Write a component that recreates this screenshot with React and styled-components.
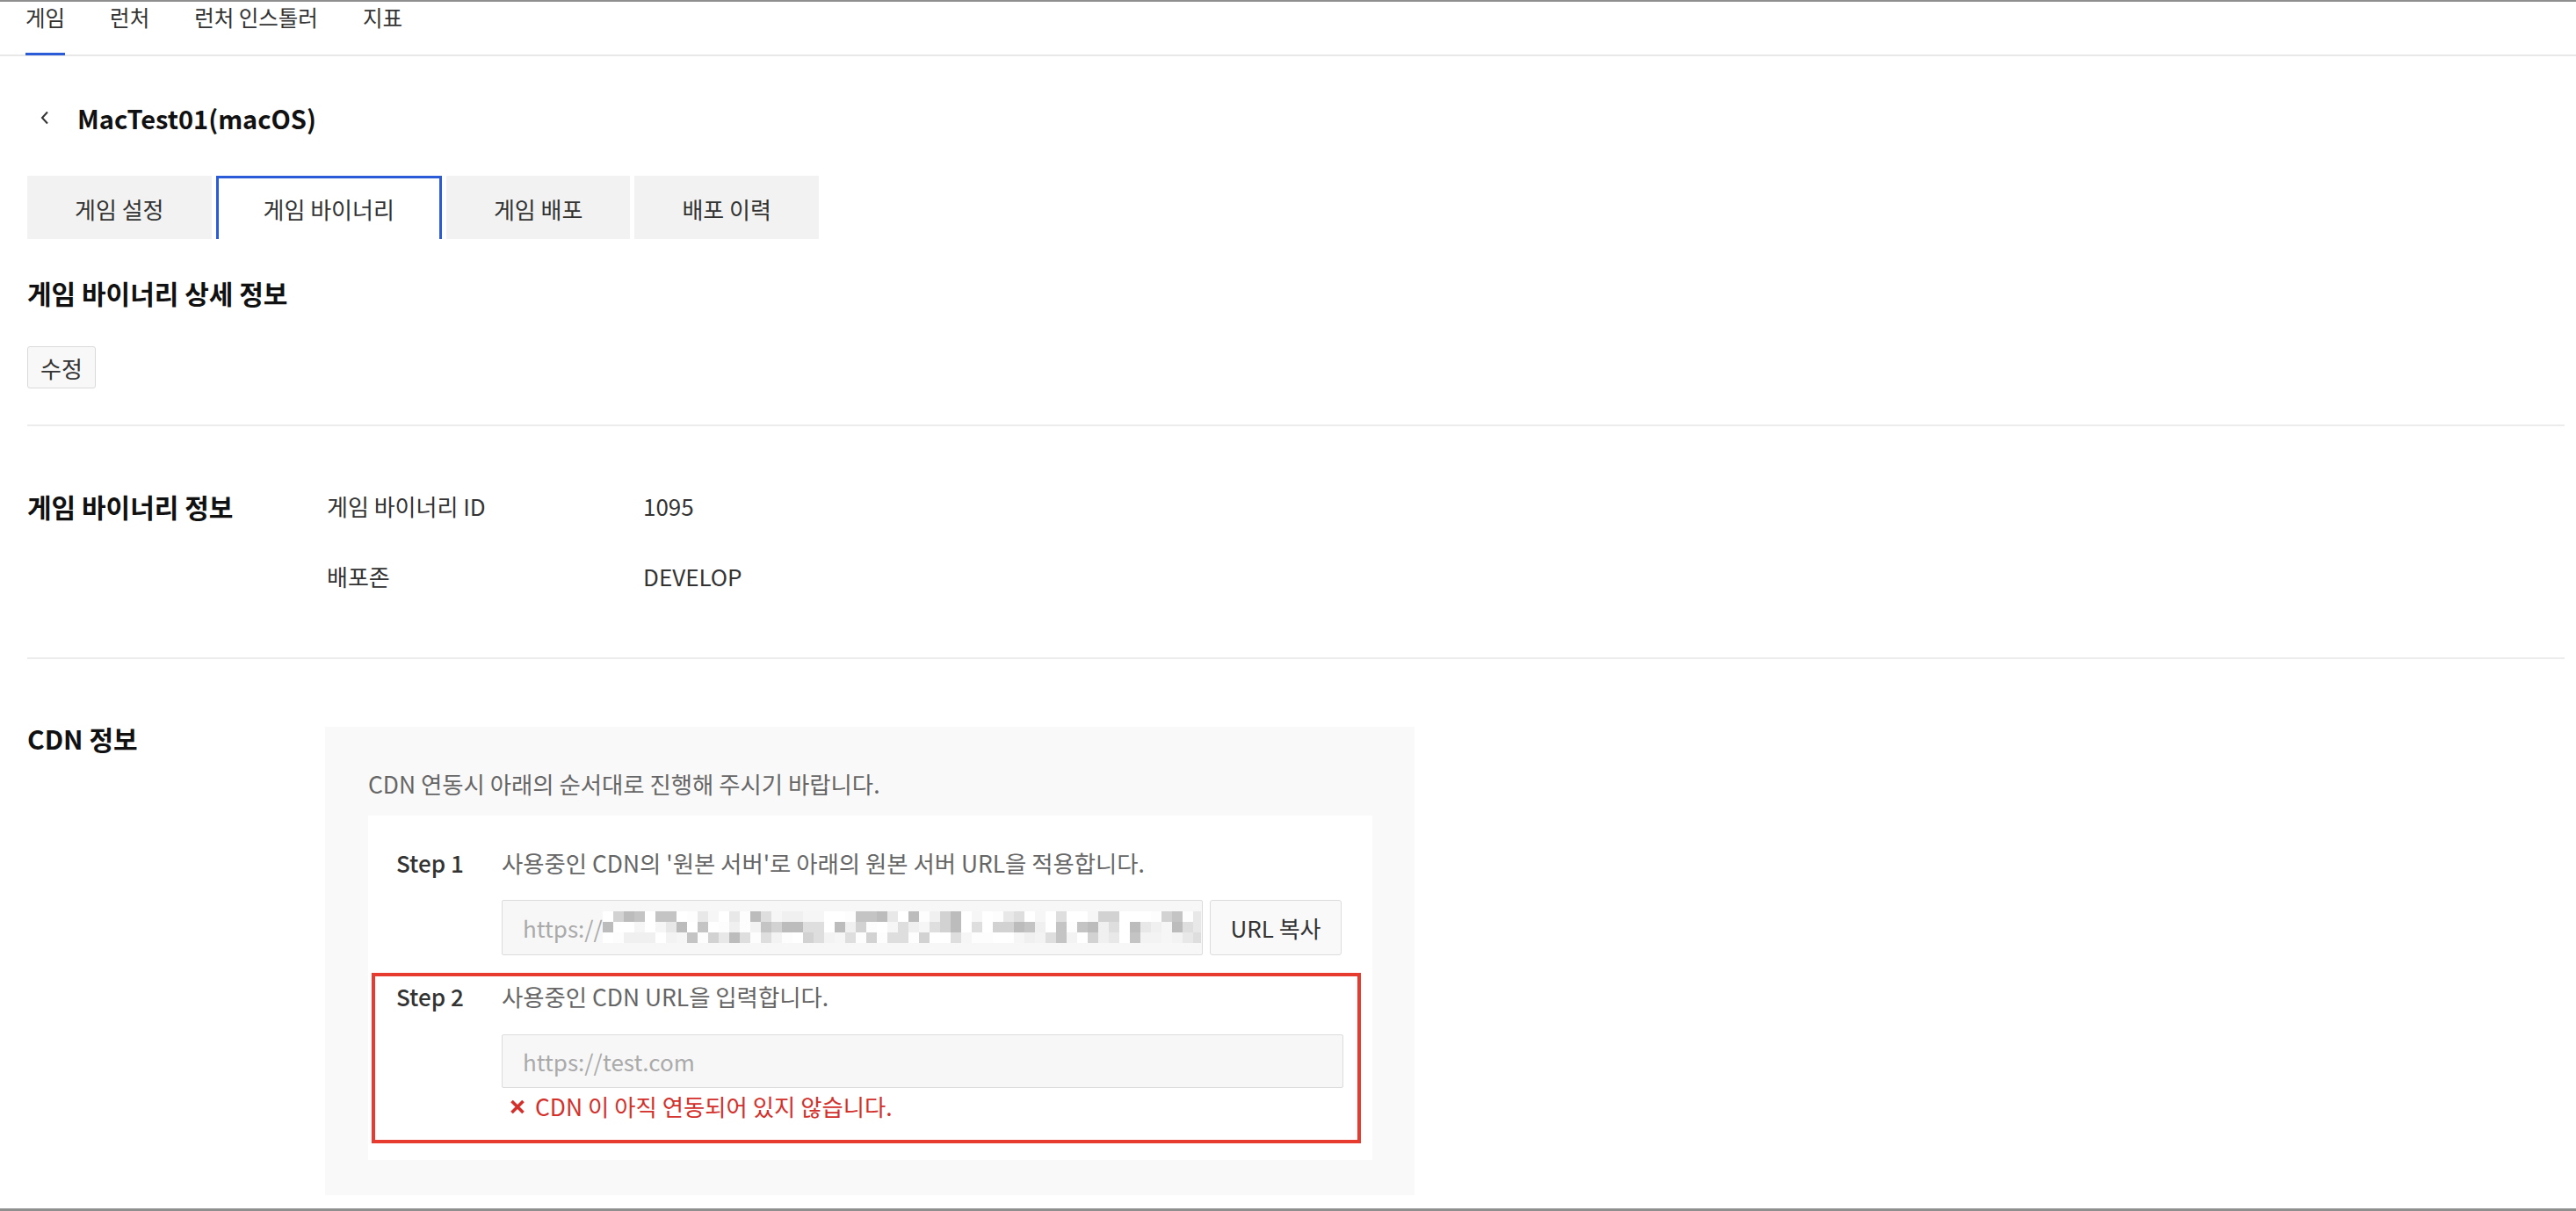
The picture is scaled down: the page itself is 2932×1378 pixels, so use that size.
import React from "react";
import styled, { createGlobalStyle } from "styled-components";

const GlobalStyle = createGlobalStyle`
  html, body { margin: 0; padding: 0; background: #fff; }
  body {
    font-family: "Noto Sans CJK KR", "Noto Sans", sans-serif;
    color: #333;
  }
  * { box-sizing: border-box; }
`;

const Frame = styled.div`
  height: 1378px;
  border-top: 2px solid #8f8f8f;
  border-bottom: 3px solid #8f8f8f;
  overflow: hidden;
  background: #fff;
`;

const Nav = styled.nav`
  display: flex;
  align-items: flex-start;
  gap: 51px;
  height: 62px;
  padding-left: 29px;
  border-bottom: 2px solid #e8e8e8;
`;

const NavItem = styled.a`
  display: block;
  height: 61px;
  font-size: 24.5px;
  line-height: 36px;
  color: #333;
  text-decoration: none;
  border-bottom: 3px solid ${(p) => (p.$active ? "#2b5bd7" : "transparent")};
`;

const Main = styled.main`
  padding: 0 13px 0 31px;
`;

const TitleRow = styled.div`
  display: flex;
  align-items: center;
  gap: 32px;
  margin-top: 49px;
  padding-left: 15px;
`;

const Title = styled.h1`
  margin: 0;
  font-size: 29px;
  line-height: 42px;
  font-weight: 700;
  color: #111;
`;

const Tabs = styled.div`
  display: flex;
  gap: 5px;
  margin-top: 45px;
`;

const Tab = styled.div`
  display: flex;
  align-items: center;
  justify-content: center;
  height: 72px;
  padding: 0 51px;
  border: 3px solid ${(p) => (p.$active ? "#2b5bd7" : "transparent")};
  border-bottom: none;
  background: ${(p) => (p.$active ? "#fff" : "#f2f2f2")};
  font-size: 26px;
  color: #333;
`;

const DetailBlock = styled.section`
  padding-bottom: 41px;
  border-bottom: 2px solid #ececec;
`;

const SectionTitle = styled.h2`
  margin: ${(p) => p.$mt || "0"} 0 0;
  font-size: 30px;
  line-height: 42px;
  font-weight: 700;
  color: #111;
`;

const EditButton = styled.button`
  display: block;
  margin-top: 40px;
  height: 48px;
  padding: 0 14px;
  background: #f8f8f8;
  border: 1px solid #dadada;
  border-radius: 3px;
  font-family: inherit;
  font-size: 26px;
  color: #333;
`;

const InfoSection = styled.section`
  display: grid;
  grid-template-columns: 341px 1fr;
  padding: 70px 0 74px;
  border-bottom: 2px solid #ececec;
`;

const InfoList = styled.dl`
  display: grid;
  grid-template-columns: 360px 1fr;
  row-gap: 44px;
  margin: 3px 0 0;
  font-size: 26px;
  line-height: 36px;
  color: #333;
`;

const InfoTerm = styled.dt`
  margin: 0;
`;

const InfoValue = styled.dd`
  margin: 0;
`;

const CdnSection = styled.section`
  display: grid;
  grid-template-columns: 339px 1240px;
  padding-top: 69px;
`;

const CdnBox = styled.div`
  margin-top: 8px;
  background: #f9f9f9;
  padding: 47px 48px 40px 49px;
`;

const Intro = styled.p`
  margin: 0 0 17.5px;
  font-size: 26.4px;
  line-height: 36px;
  color: #666;
`;

const StepsCard = styled.div`
  background: #fff;
  padding: 0 13px 19px 4px;
`;

const StepRow = styled.div`
  display: grid;
  grid-template-columns: 120px 1fr;
  ${(p) =>
    p.$highlight
      ? `
    margin-top: 20px;
    border: 4px solid #e63b2e;
    padding: 5px 16px 19.5px 24px;
  `
      : `
    padding: 36px 22px 0 28px;
  `}
`;

const StepLabel = styled.div`
  font-size: 26px;
  line-height: 36px;
  font-weight: 500;
  color: #333;
`;

const StepBody = styled.div`
  display: flex;
  flex-direction: column;
`;

const StepDesc = styled.div`
  font-size: 26.4px;
  line-height: 36px;
  color: #666;
`;

const FieldRow = styled.div`
  display: flex;
  gap: 8px;
  margin-top: ${(p) => p.$mt || "24px"};
`;

const Field = styled.div`
  flex: 1;
  display: flex;
  align-items: center;
  height: ${(p) => p.$h || "63px"};
  padding-left: 23px;
  background: #f7f7f7;
  border: 1px solid #dcdcdc;
  border-radius: 2px;
  font-size: 26px;
  color: #aaa;
  overflow: hidden;
  white-space: nowrap;
`;

const CopyButton = styled.button`
  width: 150px;
  height: 63px;
  background: #f9f9f9;
  border: 1px solid #dcdcdc;
  border-radius: 3px;
  font-family: inherit;
  font-size: 26px;
  color: #333;
`;

const ErrorText = styled.div`
  display: flex;
  align-items: center;
  gap: 11px;
  margin-top: 3.5px;
  padding-left: 9px;
  font-size: 26.4px;
  line-height: 36px;
  color: #d3302b;
`;

function Chevron() {
  return (
    <svg width="10" height="16" viewBox="0 0 10 16" fill="none">
      <polyline points="8,1.5 2,8 8,14.5" stroke="#333" strokeWidth="2" />
    </svg>
  );
}

function ErrorIcon() {
  return (
    <svg width="18" height="17" viewBox="0 0 18 17">
      <path d="M2.5 2 L15.5 15 M15.5 2 L2.5 15" stroke="#d3302b" strokeWidth="3.6" />
    </svg>
  );
}

function Mosaic() {
  const cols = 57;
  const rows = 3;
  const cell = 12;
  let seed = 1337;
  const rnd = () => {
    seed = (seed * 1103515245 + 12345) % 2147483648;
    return seed / 2147483648;
  };
  const palette = ["#ffffff", "#fdfdfd", "#f6f6f6", "#f0f0f0", "#ffffff", "#e8e8e8", "#dedede", "#ffffff", "#d2d2d2", "#c4c4c4", "#f3f3f3", "#bcbcbc"];
  const rects = [];
  for (let r = 0; r < rows; r++) {
    for (let c = 0; c < cols; c++) {
      const v = palette[Math.floor(rnd() * palette.length)];
      rects.push(<rect key={`${r}-${c}`} x={c * cell} y={r * cell + 2} width={cell} height={cell} fill={v} />);
    }
  }
  return (
    <svg width="681" height="40" viewBox="0 0 681 40" style={{ flex: "none" }}>
      {rects}
    </svg>
  );
}

export default function App() {
  return (
    <>
      <GlobalStyle />
      <Frame>
        <Nav>
          <NavItem $active>게임</NavItem>
          <NavItem>런처</NavItem>
          <NavItem>런처 인스톨러</NavItem>
          <NavItem>지표</NavItem>
        </Nav>
        <Main>
          <TitleRow>
            <Chevron />
            <Title>MacTest01(macOS)</Title>
          </TitleRow>
          <Tabs>
            <Tab>게임 설정</Tab>
            <Tab $active>게임 바이너리</Tab>
            <Tab>게임 배포</Tab>
            <Tab>배포 이력</Tab>
          </Tabs>
          <DetailBlock>
            <SectionTitle $mt="40px">게임 바이너리 상세 정보</SectionTitle>
            <EditButton>수정</EditButton>
          </DetailBlock>
          <InfoSection>
            <SectionTitle>게임 바이너리 정보</SectionTitle>
            <InfoList>
              <InfoTerm>게임 바이너리 ID</InfoTerm>
              <InfoValue>1095</InfoValue>
              <InfoTerm>배포존</InfoTerm>
              <InfoValue>DEVELOP</InfoValue>
            </InfoList>
          </InfoSection>
          <CdnSection>
            <SectionTitle>CDN 정보</SectionTitle>
            <CdnBox>
              <Intro>CDN 연동시 아래의 순서대로 진행해 주시기 바랍니다.</Intro>
              <StepsCard>
                <StepRow>
                  <StepLabel>Step 1</StepLabel>
                  <StepBody>
                    <StepDesc>사용중인 CDN의 '원본 서버'로 아래의 원본 서버 URL을 적용합니다.</StepDesc>
                    <FieldRow>
                      <Field>
                        https://
                        <Mosaic />
                      </Field>
                      <CopyButton>URL 복사</CopyButton>
                    </FieldRow>
                  </StepBody>
                </StepRow>
                <StepRow $highlight>
                  <StepLabel>Step 2</StepLabel>
                  <StepBody>
                    <StepDesc>사용중인 CDN URL을 입력합니다.</StepDesc>
                    <FieldRow $mt="25px">
                      <Field $h="61px">https://test.com</Field>
                    </FieldRow>
                    <ErrorText>
                      <ErrorIcon />
                      CDN 이 아직 연동되어 있지 않습니다.
                    </ErrorText>
                  </StepBody>
                </StepRow>
              </StepsCard>
            </CdnBox>
          </CdnSection>
        </Main>
      </Frame>
    </>
  );
}
